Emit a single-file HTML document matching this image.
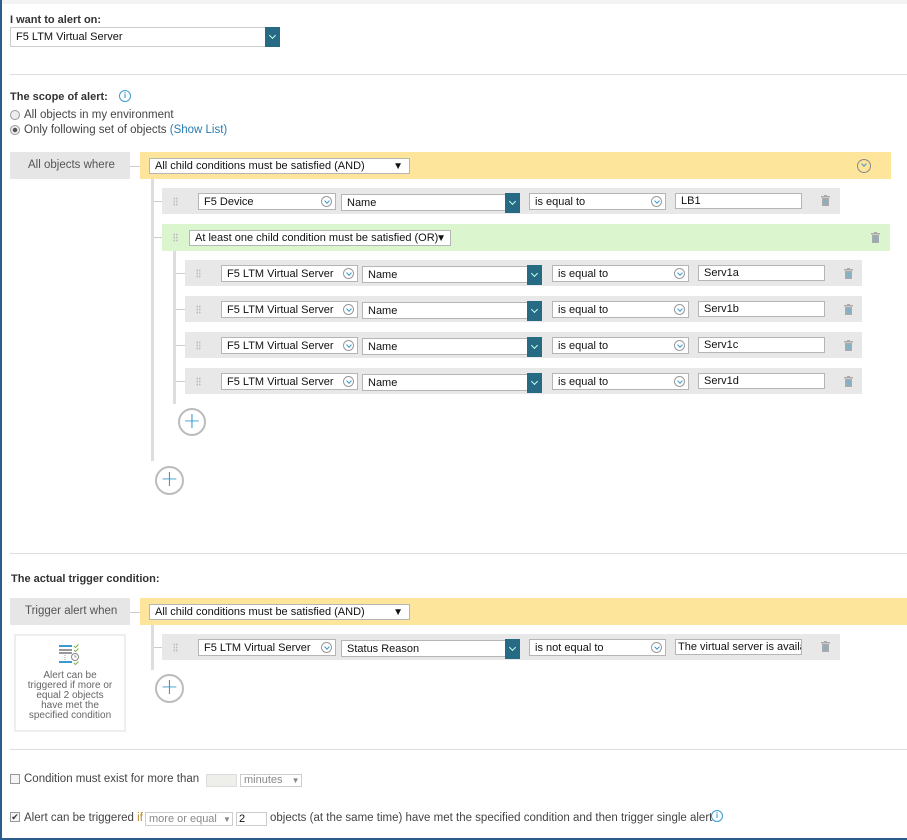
<!DOCTYPE html>
<html><head><meta charset="utf-8"><style>
*{margin:0;padding:0;box-sizing:border-box}
body{width:907px;height:840px;position:relative;background:#fff;overflow:hidden;font-family:"Liberation Sans",sans-serif;color:#444}
.a{position:absolute}
.lbl{position:absolute;font-family:"Liberation Sans",sans-serif;font-size:11.5px;color:#444;white-space:nowrap}
.b{font-weight:bold;color:#333;font-size:11px}
.hr{position:absolute;left:10px;right:0;height:1px;background:#ddd}
.sel{position:absolute;height:17px;border:1px solid #b5b5b5;background:#fff;font-size:11px;line-height:16px;padding-left:5px;color:#111;white-space:nowrap;overflow:hidden}
.cc{position:absolute;right:3px;top:2px;width:11px;height:11px;border:1px solid #999;border-radius:50%}
.cc:after{content:"";position:absolute;left:2.5px;top:1.5px;width:3px;height:3px;border-right:1px solid #3a9ad0;border-bottom:1px solid #3a9ad0;transform:rotate(45deg)}
.bb{position:absolute;width:15px;height:20px;background:#266a84}
.bb:after{content:"";position:absolute;left:5px;top:6px;width:4px;height:4px;border-right:1px solid #cfe;border-bottom:1px solid #cfe;transform:rotate(45deg)}
.row{position:absolute;background:#e8e8e8;height:26px}
.drag{position:absolute;width:5px;height:9px;background:radial-gradient(circle,#bbb 0.8px,transparent 1px) 0 0/2.5px 3px}
.tr{position:absolute;width:9px;height:11px}
.tri{position:absolute;right:6px;top:0;font-size:10px}
.vl{position:absolute;width:3px;background:#ddd}
.hl{position:absolute;height:1px;background:#ccc}
.plus{position:absolute;border:2px solid #bbb;border-radius:50%;background:#fff;color:#3a9ad0;text-align:center;font-size:22px;font-weight:300;font-family:"DejaVu Sans",sans-serif}
.info{position:absolute;width:12px;height:12px;border:1px solid #3a9ad0;border-radius:50%;color:#3a9ad0;font-size:8px;text-align:center;line-height:10px;font-weight:bold}
</style></head><body>
<div class="a" style="left:0;top:0;width:907px;height:4px;background:#f3f3f3"></div>
<div class="a" style="left:0;top:0;width:2px;height:840px;background:#2a5d8a"></div>
<div class="a" style="left:0;top:838px;width:907px;height:2px;background:#2a5d8a"></div>

<div class="lbl b" style="left:10px;top:14px">I want to alert on:</div>
<div class="sel" style="left:10px;top:27px;width:256px;height:20px;line-height:18px;border-color:#ccc">F5 LTM Virtual Server</div>
<div class="bb" style="left:265px;top:27px"></div>
<div class="hr" style="top:74px"></div>

<div class="lbl b" style="left:10px;top:91px">The scope of alert:</div>
<div class="info" style="left:119px;top:90px">i</div>
<div class="a" style="left:10px;top:110px;width:10px;height:10px;border:1px solid #999;border-radius:50%;background:#eee"></div>
<div class="lbl" style="left:24px;top:109px">All objects in my environment</div>
<div class="a" style="left:10px;top:125px;width:10px;height:10px;border:1px solid #999;border-radius:50%;background:radial-gradient(circle,#555 2px,#eee 2.5px)"></div>
<div class="lbl" style="left:24px;top:124px">Only following set of objects <span style="color:#2a7bb0">(Show List)</span></div>

<div class="a" style="left:10px;top:152px;width:120px;height:27px;background:#e6e6e6"></div>
<div class="lbl" style="left:28px;top:159px;color:#555">All objects where</div>
<div class="hl" style="left:130px;top:166px;width:10px"></div>
<div class="a" style="left:140px;top:152px;width:751px;height:27px;background:#fde59c"></div>
<div class="sel" style="left:149px;top:158px;width:261px;height:16px;line-height:15px">All child conditions must be satisfied (AND)<span class="tri">▼</span></div>
<div class="a" style="left:857px;top:159px;width:14px;height:14px;border:1px solid #888;border-radius:50%"></div>
<div class="a" style="left:862px;top:162px;width:4px;height:4px;border-right:1px solid #3a9ad0;border-bottom:1px solid #3a9ad0;transform:rotate(45deg)"></div>

<div class="vl" style="left:151px;top:179px;height:282px"></div>
<div class="hl" style="left:154px;top:201px;width:8px"></div>
<div class="row" style="left:162px;top:188px;width:678px"></div>
<div class="drag" style="left:173px;top:197px"></div>
<div class="sel" style="left:198px;top:193px;width:138px">F5 Device<span class="cc"></span></div>
<div class="sel" style="left:341px;top:194px;width:165px;height:17px">Name</div><div class="bb" style="left:505px;top:193px"></div>
<div class="sel" style="left:529px;top:193px;width:137px">is equal to<span class="cc"></span></div>
<div class="sel" style="left:675px;top:193px;width:127px;height:16px;line-height:15px">LB1</div>
<svg class="tr" style="left:821px;top:195px" viewBox="0 0 9 11"><rect x="0" y="1" width="9" height="1.5" fill="#aaa"/><rect x="3" y="0" width="3" height="1" fill="#aaa"/><rect x="1" y="3" width="7" height="8" fill="#aaa"/><path d="M3 4.5v5M4.5 4.5v5M6 4.5v5" stroke="#6bb3d6" stroke-width=".8"/></svg>

<div class="hl" style="left:154px;top:237px;width:8px"></div>
<div class="a" style="left:162px;top:224px;width:728px;height:27px;background:#dbf5cf"></div>
<div class="drag" style="left:173px;top:233px"></div>
<div class="sel" style="left:189px;top:230px;width:262px;height:16px;line-height:15px">At least one child condition must be satisfied (OR)<span class="tri" style="right:4px;color:#111">▼</span></div>
<svg class="tr" style="left:871px;top:232px" viewBox="0 0 9 11"><rect x="0" y="1" width="9" height="1.5" fill="#aaa"/><rect x="3" y="0" width="3" height="1" fill="#aaa"/><rect x="1" y="3" width="7" height="8" fill="#aaa"/><path d="M3 4.5v5M4.5 4.5v5M6 4.5v5" stroke="#6bb3d6" stroke-width=".8"/></svg>

<div class="vl" style="left:173px;top:251px;height:153px"></div>

<div class="hl" style="left:176px;top:273px;width:9px"></div>
<div class="row" style="left:185px;top:260px;width:677px"></div>
<div class="drag" style="left:196px;top:269px"></div>
<div class="sel" style="left:221px;top:265px;width:137px">F5 LTM Virtual Server<span class="cc"></span></div>
<div class="sel" style="left:362px;top:266px;width:166px">Name</div><div class="bb" style="left:527px;top:265px"></div>
<div class="sel" style="left:552px;top:265px;width:137px">is equal to<span class="cc"></span></div>
<div class="sel" style="left:698px;top:265px;width:127px;height:16px;line-height:15px">Serv1a</div>
<svg class="tr" style="left:844px;top:268px" viewBox="0 0 9 11"><rect x="0" y="1" width="9" height="1.5" fill="#aaa"/><rect x="3" y="0" width="3" height="1" fill="#aaa"/><rect x="1" y="3" width="7" height="8" fill="#aaa"/><path d="M3 4.5v5M4.5 4.5v5M6 4.5v5" stroke="#6bb3d6" stroke-width=".8"/></svg>

<div class="hl" style="left:176px;top:309px;width:9px"></div>
<div class="row" style="left:185px;top:296px;width:677px"></div>
<div class="drag" style="left:196px;top:305px"></div>
<div class="sel" style="left:221px;top:301px;width:137px">F5 LTM Virtual Server<span class="cc"></span></div>
<div class="sel" style="left:362px;top:302px;width:166px">Name</div><div class="bb" style="left:527px;top:301px"></div>
<div class="sel" style="left:552px;top:301px;width:137px">is equal to<span class="cc"></span></div>
<div class="sel" style="left:698px;top:301px;width:127px;height:16px;line-height:15px">Serv1b</div>
<svg class="tr" style="left:844px;top:304px" viewBox="0 0 9 11"><rect x="0" y="1" width="9" height="1.5" fill="#aaa"/><rect x="3" y="0" width="3" height="1" fill="#aaa"/><rect x="1" y="3" width="7" height="8" fill="#aaa"/><path d="M3 4.5v5M4.5 4.5v5M6 4.5v5" stroke="#6bb3d6" stroke-width=".8"/></svg>

<div class="hl" style="left:176px;top:345px;width:9px"></div>
<div class="row" style="left:185px;top:332px;width:677px"></div>
<div class="drag" style="left:196px;top:341px"></div>
<div class="sel" style="left:221px;top:337px;width:137px">F5 LTM Virtual Server<span class="cc"></span></div>
<div class="sel" style="left:362px;top:338px;width:166px">Name</div><div class="bb" style="left:527px;top:337px"></div>
<div class="sel" style="left:552px;top:337px;width:137px">is equal to<span class="cc"></span></div>
<div class="sel" style="left:698px;top:337px;width:127px;height:16px;line-height:15px">Serv1c</div>
<svg class="tr" style="left:844px;top:340px" viewBox="0 0 9 11"><rect x="0" y="1" width="9" height="1.5" fill="#aaa"/><rect x="3" y="0" width="3" height="1" fill="#aaa"/><rect x="1" y="3" width="7" height="8" fill="#aaa"/><path d="M3 4.5v5M4.5 4.5v5M6 4.5v5" stroke="#6bb3d6" stroke-width=".8"/></svg>

<div class="hl" style="left:176px;top:381px;width:9px"></div>
<div class="row" style="left:185px;top:368px;width:677px"></div>
<div class="drag" style="left:196px;top:377px"></div>
<div class="sel" style="left:221px;top:373px;width:137px">F5 LTM Virtual Server<span class="cc"></span></div>
<div class="sel" style="left:362px;top:374px;width:166px">Name</div><div class="bb" style="left:527px;top:373px"></div>
<div class="sel" style="left:552px;top:373px;width:137px">is equal to<span class="cc"></span></div>
<div class="sel" style="left:698px;top:373px;width:127px;height:16px;line-height:15px">Serv1d</div>
<svg class="tr" style="left:844px;top:376px" viewBox="0 0 9 11"><rect x="0" y="1" width="9" height="1.5" fill="#aaa"/><rect x="3" y="0" width="3" height="1" fill="#aaa"/><rect x="1" y="3" width="7" height="8" fill="#aaa"/><path d="M3 4.5v5M4.5 4.5v5M6 4.5v5" stroke="#6bb3d6" stroke-width=".8"/></svg>

<div class="plus" style="left:178px;top:408px;width:28px;height:28px;line-height:23px">+</div>
<div class="plus" style="left:155px;top:466px;width:29px;height:29px;line-height:24px">+</div>

<div class="hr" style="top:553px"></div>
<div class="lbl b" style="left:11px;top:573px">The actual trigger condition:</div>

<div class="a" style="left:10px;top:598px;width:120px;height:27px;background:#e6e6e6"></div>
<div class="lbl" style="left:25px;top:605px;color:#555">Trigger alert when</div>
<div class="hl" style="left:130px;top:612px;width:10px"></div>
<div class="a" style="left:140px;top:598px;width:767px;height:27px;background:#fde59c"></div>
<div class="sel" style="left:149px;top:604px;width:261px;height:16px;line-height:15px">All child conditions must be satisfied (AND)<span class="tri">▼</span></div>

<div class="vl" style="left:151px;top:625px;height:45px"></div>
<div class="hl" style="left:154px;top:647px;width:8px"></div>
<div class="row" style="left:162px;top:634px;width:678px"></div>
<div class="drag" style="left:173px;top:643px"></div>
<div class="sel" style="left:198px;top:639px;width:138px">F5 LTM Virtual Server<span class="cc"></span></div>
<div class="sel" style="left:341px;top:640px;width:165px">Status Reason</div><div class="bb" style="left:505px;top:639px"></div>
<div class="sel" style="left:529px;top:639px;width:137px">is not equal to<span class="cc"></span></div>
<div class="sel" style="left:675px;top:639px;width:127px;height:16px;line-height:15px;padding-left:2px">The virtual server is availa</div>
<svg class="tr" style="left:821px;top:641px" viewBox="0 0 9 11"><rect x="0" y="1" width="9" height="1.5" fill="#aaa"/><rect x="3" y="0" width="3" height="1" fill="#aaa"/><rect x="1" y="3" width="7" height="8" fill="#aaa"/><path d="M3 4.5v5M4.5 4.5v5M6 4.5v5" stroke="#6bb3d6" stroke-width=".8"/></svg>
<div class="plus" style="left:155px;top:674px;width:29px;height:29px;line-height:24px">+</div>

<div class="a" style="left:14px;top:634px;width:112px;height:98px;border:2px solid #eee"></div>
<svg class="a" style="left:58px;top:644px" width="24" height="22" viewBox="0 0 24 22"><rect x="1" y="1" width="13" height="2" fill="#3a9ad0"/><rect x="1" y="5" width="13" height="2" fill="#999"/><rect x="1" y="8" width="13" height="2" fill="#999"/><path d="M7 11v5" stroke="#999" stroke-dasharray="1 1"/><rect x="1" y="17" width="13" height="2" fill="#3a9ad0"/><circle cx="17" cy="13" r="3.5" fill="none" stroke="#888"/><path d="M17 11v2h1.5" stroke="#888" fill="none" stroke-width=".8"/><path d="M16 2l1.5 1.5 3-3M16 6l1.5 1.5 3-3M16 19l1.5 1.5 3-3" stroke="#7ab648" fill="none"/></svg>
<div class="lbl" style="left:14px;top:671px;width:112px;text-align:center;white-space:normal;font-size:10px;line-height:10px;color:#666;padding:0 12px">Alert can be triggered if more or equal 2 objects have met the specified condition</div>

<div class="hr" style="top:749px"></div>

<div class="a" style="left:10px;top:774px;width:10px;height:10px;border:1px solid #999;background:#f5f5f5"></div>
<div class="lbl" style="left:24px;top:773px">Condition must exist for more than</div>
<div class="a" style="left:206px;top:774px;width:31px;height:13px;border:1px solid #ddd;background:#eeeeea"></div>
<div class="a" style="left:240px;top:774px;width:62px;height:13px;border:1px solid #ccc;font-size:11px;color:#888;line-height:11px;padding-left:3px">minutes <span style="font-size:8px;margin-left:6px">▼</span></div>

<div class="a" style="left:10px;top:812px;width:10px;height:10px;border:1px solid #999;background:#f5f5f5;font-size:9px;line-height:8px;color:#333;text-align:center">✔</div>
<div class="lbl" style="left:24px;top:812px">Alert can be triggered <span style="color:#b58a2a">if</span></div>
<div class="a" style="left:145px;top:812px;width:88px;height:14px;border:1px solid #ccc;font-size:11px;color:#888;line-height:12px;padding-left:3px">more or equal <span style="font-size:8px;margin-left:3px">▼</span></div>
<div class="a" style="left:236px;top:812px;width:31px;height:14px;border:1px solid #ccc;font-size:11px;line-height:12px;padding-left:2px;color:#111">2</div>
<div class="lbl" style="left:270px;top:812px">objects (at the same time) have met the specified condition and then trigger single alert</div>
<div class="info" style="left:711px;top:810px">i</div>
</body></html>
